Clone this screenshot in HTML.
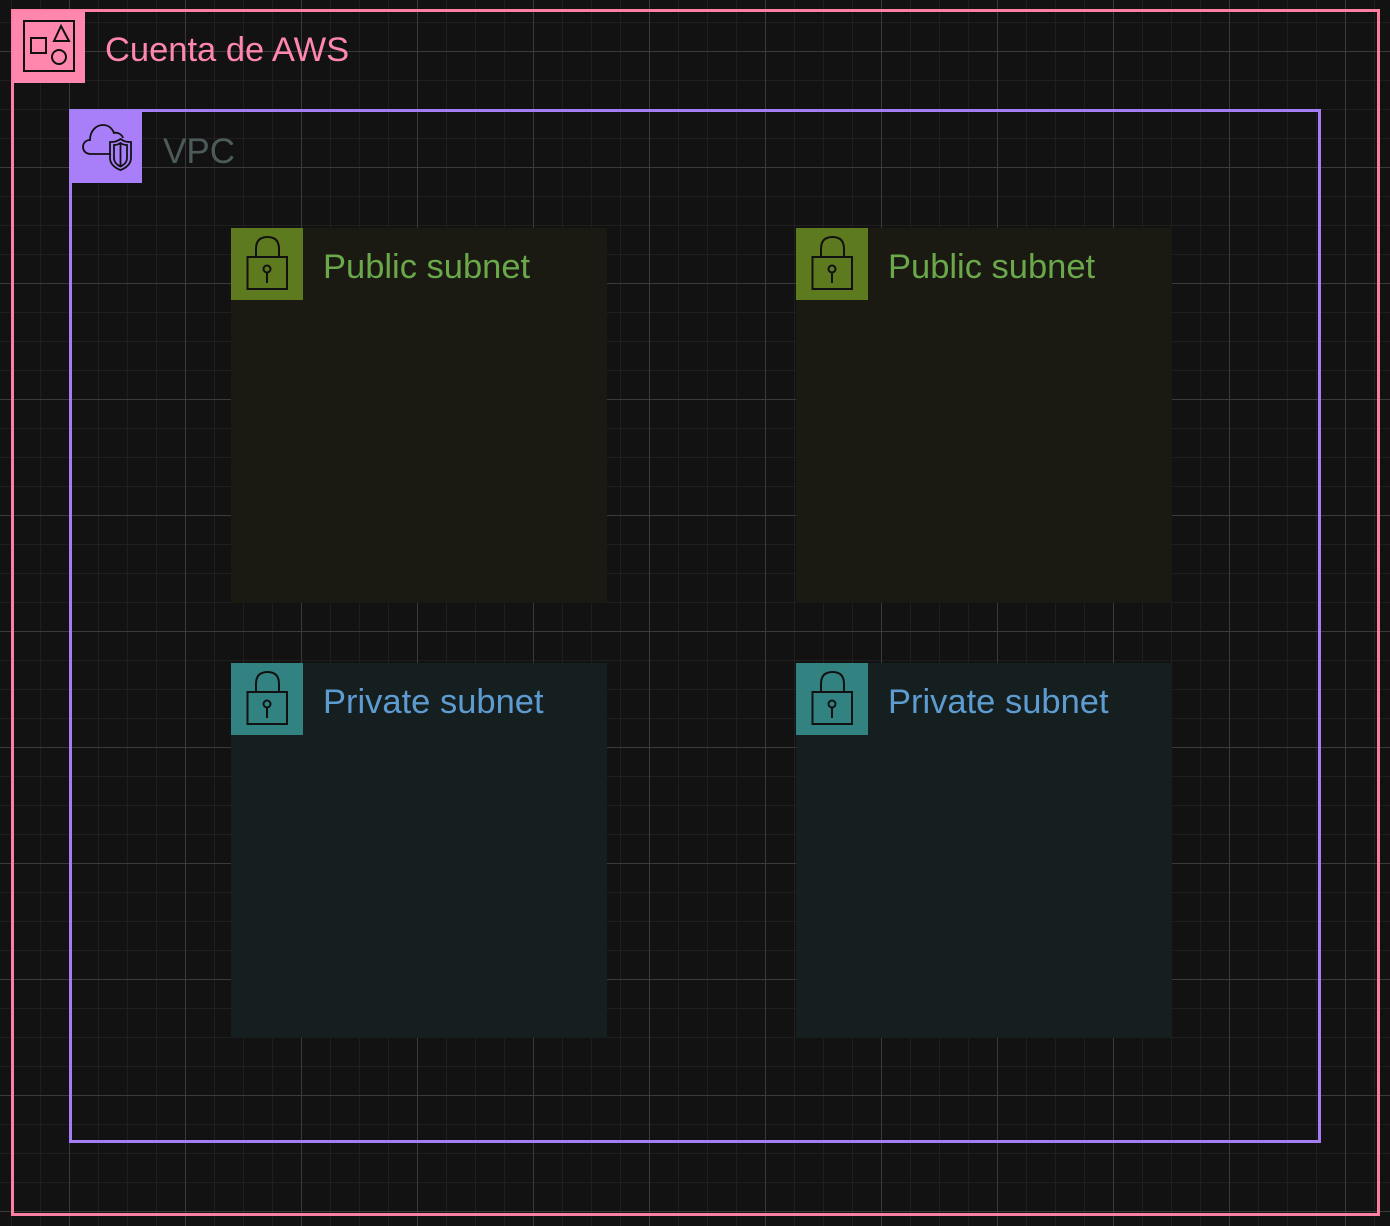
<!DOCTYPE html>
<html><head><meta charset="utf-8"><style>
html,body{margin:0;padding:0;}
body{width:1390px;height:1226px;position:relative;overflow:hidden;background:#121212;
background-image:
linear-gradient(to right,#3a3a3a 1px,transparent 1px),
linear-gradient(to bottom,#3a3a3a 1px,transparent 1px),
linear-gradient(to right,#1f1f1f 1px,transparent 1px),
linear-gradient(to bottom,#1f1f1f 1px,transparent 1px);
background-size:116px 116px,116px 116px,29px 29px,29px 29px;
background-position:69px 0,0 51px,11px 0,0 22px;
font-family:"Liberation Sans",Helvetica,Arial,sans-serif;}
.box{position:absolute;box-sizing:border-box;}
.lbl{position:absolute;font-size:34.5px;white-space:nowrap;line-height:1;}
.ic{position:absolute;width:72px;height:72px;}
</style></head><body>
<div class="box" style="left:11px;top:9px;width:1369px;height:1207px;border:3px solid #ff7fa4;"></div>
<div class="ic" style="left:13px;top:11px;background:#ff86ad;">
<svg width="72" height="72" viewBox="0 0 72 72" fill="none" stroke="#111" stroke-width="2"><rect x="11" y="10" width="50" height="50"/><rect x="18" y="27" width="15" height="15"/><path d="M48 15 L41 30 L56 30 Z"/><circle cx="46" cy="46" r="7"/></svg>
</div>
<div class="lbl" style="left:105px;top:33px;color:#ff86ad;">Cuenta de AWS</div>

<div class="box" style="left:69px;top:109px;width:1252px;height:1034px;border:3px solid #a57df4;"></div>
<div class="ic" style="left:70px;top:111px;background:#a97ff9;">
<svg width="72" height="72" viewBox="0 0 72 72" fill="none" stroke="#111" stroke-width="1.8"><path d="M41 43 H21 C15 43 13 39 13 36 C13 32 16 29 20 29 C20 20 26 14 33 14 C38 14 42 17 44 22 C47 21 52 23 53 27"/><path d="M50.5 28 C46 31 44 31 40 31 V47 C40 53 45 57 50.5 59 C56 57 61 53 61 47 V31 C57 31 55 31 50.5 28 Z"/><path d="M50.5 32 C47.5 34 46 34 44 34 V47 C44 51 47 54 50.5 55.5 C54 54 57 51 57 47 V34 C55 34 53.5 34 50.5 32 Z"/><path d="M50.5 32 V55.5"/></svg>
</div>
<div class="lbl" style="left:163px;top:134px;color:#4d5a5a;font-size:35px;">VPC</div>

<div class="box" style="left:231px;top:228px;width:376px;height:375px;background:#1a1a13;"></div>
<div class="box" style="left:796px;top:228px;width:376px;height:375px;background:#1a1a13;"></div>
<div class="box" style="left:231px;top:663px;width:376px;height:375px;background:#151f20;"></div>
<div class="box" style="left:796px;top:663px;width:376px;height:375px;background:#151f20;"></div>

<svg width="0" height="0" style="position:absolute"><defs><g id="lock" fill="none" stroke="#111" stroke-width="2"><path d="M25 29 V21 C25 13 29 9 36.5 9 C44 9 48 13 48 21 V29"/><rect x="16.5" y="29" width="39.5" height="32"/><circle cx="36" cy="41" r="3.5"/><path d="M36 44.5 V55"/></g></defs></svg>

<div class="ic" style="left:231px;top:228px;background:#5e7a1f;"><svg width="72" height="72"><use href="#lock"/></svg></div>
<div class="ic" style="left:796px;top:228px;background:#5e7a1f;"><svg width="72" height="72"><use href="#lock"/></svg></div>
<div class="ic" style="left:231px;top:663px;background:#338282;"><svg width="72" height="72"><use href="#lock"/></svg></div>
<div class="ic" style="left:796px;top:663px;background:#338282;"><svg width="72" height="72"><use href="#lock"/></svg></div>

<div class="lbl" style="left:323px;top:250px;color:#6aa84a;">Public subnet</div>
<div class="lbl" style="left:888px;top:250px;color:#6aa84a;">Public subnet</div>
<div class="lbl" style="left:323px;top:685px;color:#5d9bd0;">Private subnet</div>
<div class="lbl" style="left:888px;top:685px;color:#5d9bd0;">Private subnet</div>
</body></html>
